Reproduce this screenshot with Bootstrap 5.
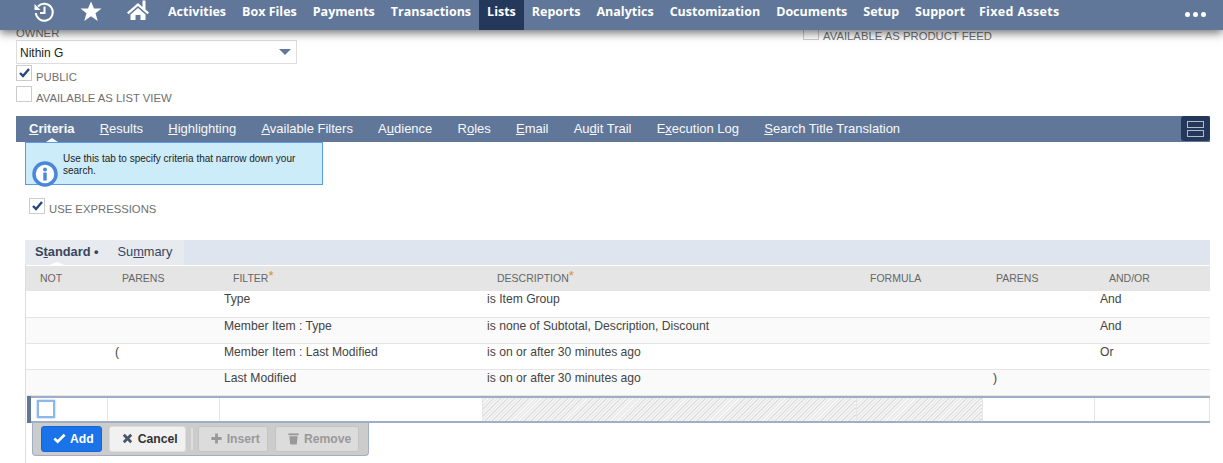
<!DOCTYPE html>
<html lang="en">
<head>
<meta charset="utf-8">
<title>Saved Search</title>
<link href="https://cdn.jsdelivr.net/npm/bootstrap@5.3.0/dist/css/bootstrap.min.css" rel="stylesheet">
<style>
html,body{height:463px;overflow:hidden;background:#fff}
body{font-family:"Liberation Sans",Arial,sans-serif;font-size:12px;color:#333}
.topbar{height:30px;background:#607799;box-shadow:0 3px 9px rgba(0,0,0,.55);position:relative;z-index:5;padding-left:32px}
.topbar-icon{width:24px;height:24px;color:#fff;display:block}
.icons-wrap{gap:23px;margin-right:10px}
.main-link{font-family:"Open Sans",sans-serif;font-weight:700;font-size:12.5px;color:#fff;text-decoration:none;padding:0 8px;height:30px;line-height:24px;display:block}
.main-link.is-active{background:#24385b}
.main-link.is-wide{margin-left:-2px;letter-spacing:.35px}
.more-dots{margin-left:auto;margin-right:17px;gap:3px;height:28px}
.more-dots i{width:5px;height:5px;border-radius:50%;background:#fff;display:block}
.form-top{padding-left:16px;height:86px;position:relative}
.form-col{width:787px}
.field-label{font-size:11.300px;color:#6f6f6f;line-height:11px;text-transform:uppercase}
.owner-label{margin-top:-2px}
.owner-select{width:281px;height:24px;border:1px solid #ddd;color:#222;padding-left:3px;line-height:20px;margin:1px 0}
.owner-select span:first-child{position:relative;top:1px}
.caret-down{width:0;height:0;border-left:6.500px solid transparent;border-right:6.500px solid transparent;border-top:6px solid #607799;margin-right:5px}
.check-box{width:16px;height:16px;border:1px solid #ccc;display:block;flex:none;background:#fff}
.check-row{gap:4px;height:21px}
.check-row .field-label{padding-top:7px}
.feed-row{margin-top:-6px}
.check-box svg{display:block;width:15px;height:14px}
.tabs-bar{margin-left:16px;width:1194px;height:26px;background:#607799;padding-left:1px}
.tab-link{color:#fff;font-size:13px;text-decoration:none;line-height:26px;padding:0 12px;margin-right:1.200px;position:relative;opacity:.96}
.tab-link u{text-underline-offset:1px}
.tab-link.is-current{font-weight:700}
.tab-link.is-current::after{content:"";position:absolute;left:50%;margin-left:-6px;bottom:0;border-left:6px solid transparent;border-right:6px solid transparent;border-bottom:4px solid #fff}
.layout-btn{width:29px;height:25px;background:#24385b;border-radius:3px;margin-left:auto;gap:2px}
.layout-btn i{display:block;width:17px;height:7px;border:1px solid #b4bbc7}
.help-box{margin-left:25px;width:298px;height:43px;background:#cdecfa;border:1px solid #5d9aea;padding:10px 0 0 37px;font-size:10px;line-height:11.500px;color:#222;position:relative}
.help-icon{position:absolute;left:6px;top:18px;width:26px;height:26px}
.use-row{margin-left:29px;margin-top:13px;gap:4px;height:17px}
.use-row .field-label{padding-top:6px}
.sub-tabs{margin:25px 13px 0 25px;height:25px;background:#dfe5ef}
.sub-tab{font-size:12.800px;line-height:24px;color:#37465e;padding:0 10px;background:#e7eaef;position:relative}
.sub-strip{background:#e7eaef;width:159px}
.sub-tab.is-current{padding-right:9px}
.sub-tab.is-current::after{content:"";position:absolute;left:22px;bottom:-1px;border-left:10px solid transparent;border-right:10px solid transparent;border-bottom:4px solid #fff}
.grid-panel{margin-left:25px;border-left:1px solid #ddd;padding-top:1px;height:200px;position:relative}
.search-table{width:1184px;table-layout:fixed;border-collapse:collapse;margin:0}
.search-table th{height:25px;padding:1px 0 0 14px;background:#e5e5e5;color:#666;font-size:10.500px;font-weight:400;border:0;vertical-align:middle}
.search-table th:nth-child(4),.search-table th:nth-child(7){padding-left:15px}
.search-table th span{color:#d4903a;font-size:13px;position:relative;top:-2px;line-height:0}
.search-table td{height:26px;padding:1px 0 0 5px;vertical-align:top;border:0;border-bottom:1px solid #e5e5e5;color:#444;font-size:12.150px;line-height:15px;background:#fff;box-sizing:border-box}
.search-table tr.alt td{background:#fafafa}
.search-table td.paren-open{padding-left:7px}
.search-table td.paren-close{padding-left:11px}
.search-table td:last-child{padding-left:6px}
.entry-table{margin:0 0 0 5px;width:1179px;table-layout:fixed;border-collapse:collapse;border-top:2px solid #9fadc5;border-bottom:2px solid #9fadc5}
.entry-table td{height:25px;padding:0;border:0;border-right:1px solid #e5e5e5;background:#fff}
.entry-table td.hatched{background:repeating-linear-gradient(135deg,#dcdcdc 0 1px,#f8f8f8 1px 2.500px)}
.entry-row-wrap{position:relative}
.entry-marker{position:absolute;left:1px;top:0;bottom:0;width:4px;background:#607799}
.entry-check{display:block;width:18px;height:18px;border:2px solid #8db7ea;background:#fff;margin-left:6px;box-shadow:0 0 2px #8db7ea}
.action-bar{margin-left:6px;width:337px;height:33px;background:#ccc;border:1px solid #9fadc5;border-top:0;border-radius:0 0 4px 4px;padding:3px 0 0 8px;gap:7px;align-items:flex-start}
.act-btn{height:26px;font-size:12.200px;font-weight:700;padding:0 7px 0 11px;border-radius:3px;line-height:24px;white-space:nowrap;flex:none;--bs-btn-font-size:12.200px;--bs-btn-padding-y:0;--bs-btn-line-height:24px}
.act-add{background:#1a73e8;border:1px solid #1467d2;color:#fff}
.act-cancel{background:#f1f1f1;border:1px solid #ddd;color:#333}
.act-off,.act-off:disabled{background:#dcdcdc;border:1px solid #c4c4c4;color:#999;opacity:1}
.act-btn svg{width:13px;height:13px;vertical-align:-2px;margin-right:4px}
.act-sep{width:2px;height:22px;background:#ddd;margin:2px -2px 0 -2px}
</style>
</head>
<body>
<header class="topbar d-flex align-items-start">
  <div class="d-flex icons-wrap align-items-start">
    <svg class="topbar-icon" viewBox="0 0 24 24" fill="none" stroke="currentColor" stroke-width="2"><path d="M6 6.500A8.500 8.500 0 1 1 3.800 13"/><path d="M2.500 4v6h6" stroke="none" fill="currentColor"/><path d="M12.500 6.500V13H8"/></svg>
    <svg class="topbar-icon" viewBox="0 0 24 24" fill="currentColor"><path d="M12 1.500l3 7h7.500l-6 4.800 2.300 7.700L12 16.300 5.200 21l2.300-7.700-6-4.800H9z"/></svg>
    <svg class="topbar-icon" viewBox="0 0 24 24" fill="currentColor"><path d="M12 3L1 12.500l1.500 1.700L12 6l9.500 8.200 1.500-1.700-3.500-3V.500h-3V7z"/><path d="M4.500 14.500L12 8l7.500 6.500V20h-5v-5h-5v5h-5z"/></svg>
  </div>
  <nav class="d-flex">
    <a class="main-link" href="#">Activities</a>
    <a class="main-link" href="#">Box Files</a>
    <a class="main-link" href="#">Payments</a>
    <a class="main-link" href="#">Transactions</a>
    <a class="main-link is-active" href="#">Lists</a>
    <a class="main-link" href="#">Reports</a>
    <a class="main-link" href="#">Analytics</a>
    <a class="main-link" href="#">Customization</a>
    <a class="main-link" href="#">Documents</a>
    <a class="main-link" href="#">Setup</a>
    <a class="main-link" href="#">Support</a>
    <a class="main-link is-wide" href="#">Fixed Assets</a>
  </nav>
  <div class="more-dots d-flex align-items-center"><i></i><i></i><i></i></div>
</header>

<section class="form-top d-flex">
  <div class="form-col">
    <div class="field-label owner-label">Owner</div>
    <div class="owner-select d-flex align-items-center justify-content-between"><span>Nithin G</span><span class="caret-down"></span></div>
    <div class="check-row d-flex">
      <span class="check-box"><svg viewBox="0 0 15 14"><path d="M3 7l3 3 6-7" fill="none" stroke="#24487f" stroke-width="2.400"/></svg></span>
      <span class="field-label">Public</span>
    </div>
    <div class="check-row d-flex">
      <span class="check-box"></span>
      <span class="field-label">Available as list view</span>
    </div>
  </div>
  <div class="check-row feed-row d-flex">
    <span class="check-box"></span>
    <span class="field-label">Available as product feed</span>
  </div>
</section>

<div class="tabs-bar d-flex align-items-start">
  <a class="tab-link is-current" href="#"><u>C</u>riteria</a>
  <a class="tab-link" href="#"><u>R</u>esults</a>
  <a class="tab-link" href="#"><u>H</u>ighlighting</a>
  <a class="tab-link" href="#"><u>A</u>vailable Filters</a>
  <a class="tab-link" href="#">A<u>u</u>dience</a>
  <a class="tab-link" href="#">R<u>o</u>les</a>
  <a class="tab-link" href="#"><u>E</u>mail</a>
  <a class="tab-link" href="#">Au<u>d</u>it Trail</a>
  <a class="tab-link" href="#">E<u>x</u>ecution Log</a>
  <a class="tab-link" href="#"><u>S</u>earch Title Translation</a>
  <div class="layout-btn d-flex flex-column align-items-center justify-content-center"><i></i><i></i></div>
</div>

<div class="help-box">
  Use this tab to specify criteria that narrow down your<br>search.
  <svg class="help-icon" viewBox="0 0 26 26"><circle cx="13" cy="13" r="11" fill="#fff" stroke="#4a86dc" stroke-width="3.500"/><circle cx="13" cy="8.500" r="1.900" fill="#4a86dc"/><rect x="11.300" y="11.500" width="3.400" height="8" fill="#4a86dc"/></svg>
</div>

<div class="use-row d-flex">
  <span class="check-box"><svg viewBox="0 0 15 14"><path d="M3 7l3 3 6-7" fill="none" stroke="#24487f" stroke-width="2.400"/></svg></span>
  <span class="field-label">Use expressions</span>
</div>

<div class="sub-tabs d-flex">
  <div class="sub-strip d-flex">
    <span class="sub-tab is-current"><b>S<u>t</u>andard •</b></span>
    <span class="sub-tab">Su<u>m</u>mary</span>
  </div>
</div>

<div class="grid-panel">
  <table class="search-table">
    <colgroup><col style="width:82px"><col style="width:111px"><col style="width:263px"><col style="width:374px"><col style="width:126px"><col style="width:112px"><col></colgroup>
    <thead><tr><th>NOT</th><th>PARENS</th><th>FILTER<span>*</span></th><th>DESCRIPTION<span>*</span></th><th>FORMULA</th><th>PARENS</th><th>AND/OR</th></tr></thead>
    <tbody>
      <tr><td></td><td></td><td>Type</td><td>is Item Group</td><td></td><td></td><td>And</td></tr>
      <tr class="alt"><td></td><td></td><td>Member Item : Type</td><td>is none of Subtotal, Description, Discount</td><td></td><td></td><td>And</td></tr>
      <tr><td></td><td class="paren-open">(</td><td>Member Item : Last Modified</td><td>is on or after 30 minutes ago</td><td></td><td></td><td>Or</td></tr>
      <tr class="alt"><td></td><td></td><td>Last Modified</td><td>is on or after 30 minutes ago</td><td></td><td class="paren-close">)</td><td></td></tr>
    </tbody>
  </table>

  <div class="entry-row-wrap">
    <span class="entry-marker"></span>
    <table class="entry-table">
      <colgroup><col style="width:76px"><col style="width:112px"><col style="width:263px"><col style="width:374px"><col style="width:126px"><col style="width:112px"><col></colgroup>
      <tr><td><span class="entry-check"></span></td><td></td><td></td><td class="hatched"></td><td class="hatched"></td><td></td><td></td></tr>
    </table>
  </div>

  <div class="action-bar d-flex">
    <button class="btn act-btn act-add" type="button"><svg viewBox="0 0 14 14"><path d="M1.500 7l3.500 3.500 7.500-7.500" fill="none" stroke="currentColor" stroke-width="2.800"/></svg>Add</button>
    <button class="btn act-btn act-cancel" type="button"><svg viewBox="0 0 14 14"><path d="M3 3l8 8M11 3l-8 8" fill="none" stroke="#4a5565" stroke-width="3"/></svg>Cancel</button>
    <span class="act-sep"></span>
    <button class="btn act-btn act-off" type="button" disabled><svg viewBox="0 0 14 14"><path d="M7 1.500v11M1.500 7h11" fill="none" stroke="currentColor" stroke-width="3"/></svg>Insert</button>
    <button class="btn act-btn act-off" type="button" disabled><svg viewBox="0 0 14 14" fill="currentColor"><rect x="1.500" y="1.500" width="11" height="2"/><path d="M2.500 4.500h9l-1 9h-7z"/></svg>Remove</button>
  </div>
</div>
<script src="https://cdn.jsdelivr.net/npm/bootstrap@5.3.0/dist/js/bootstrap.bundle.min.js"></script>
</body>
</html>
